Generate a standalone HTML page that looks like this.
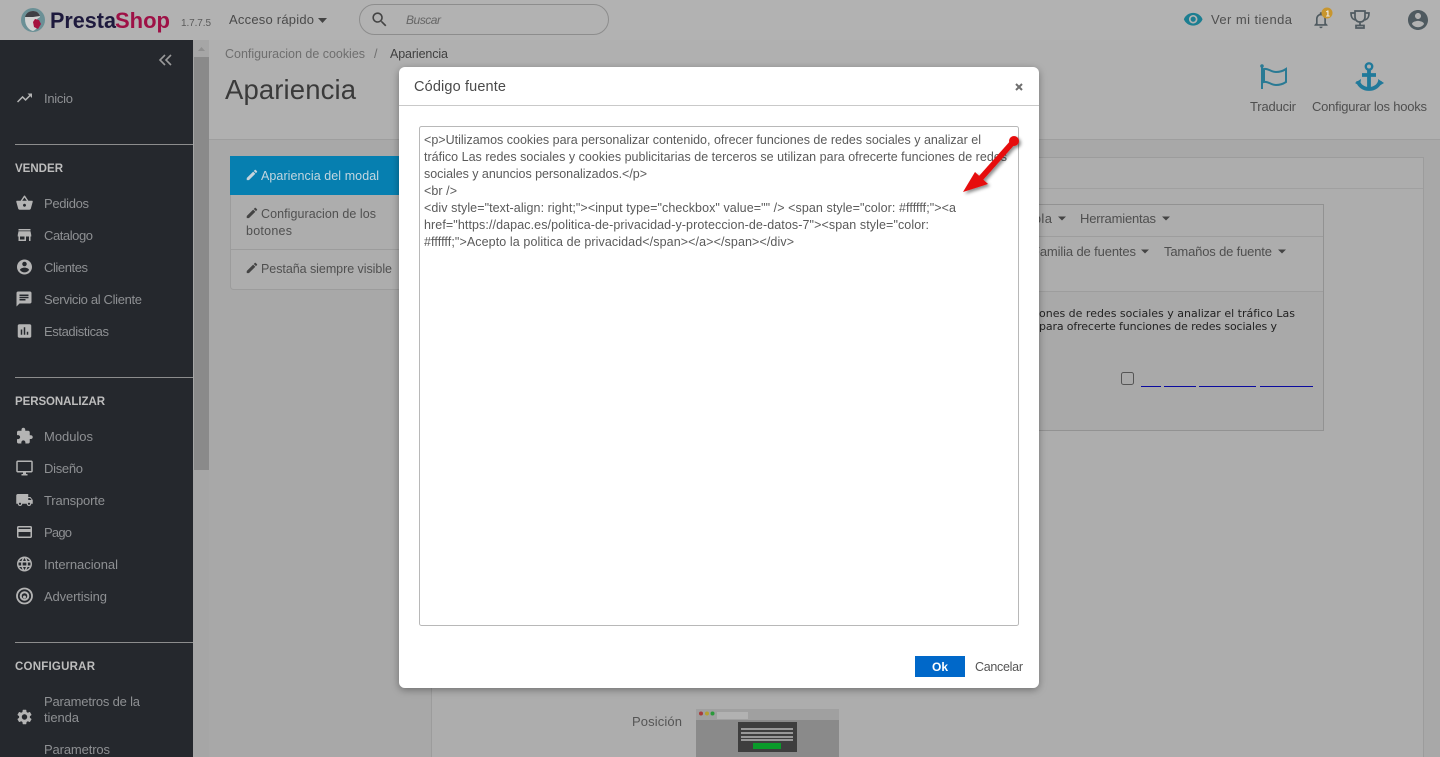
<!DOCTYPE html>
<html lang="es"><head><meta charset="utf-8"><title>Apariencia</title>
<style>
html,body{margin:0;padding:0;width:1440px;height:757px;overflow:hidden;background:#a9a9a9}
svg{display:block;font-family:"Liberation Sans",sans-serif;font-size:13px}
.s{fill:#8e9093}.h{fill:#bdbdbd;font-weight:bold;font-size:11.5px}.i{fill:#b4b4b4}
.d{fill:#4a4a4a}.m{fill:#4f4f4f}.t{font-size:12.5px;fill:#5a5a5a}
</style></head><body>
<svg width="1440" height="757" viewBox="0 0 1440 757" xmlns="http://www.w3.org/2000/svg">
<defs>
<filter id="ms" x="-5%" y="-5%" width="110%" height="110%"><feDropShadow dx="0" dy="2" stdDeviation="4" flood-color="#000" flood-opacity=".35"/></filter>
<filter id="as" x="-30%" y="-30%" width="170%" height="170%"><feDropShadow dx="2" dy="2" stdDeviation="1.5" flood-color="#000" flood-opacity=".45"/></filter>
</defs>
<rect width="1440" height="757" fill="#a8a8a8"/>
<!-- top bar -->
<rect width="1440" height="40" fill="#b2b2b2"/>
<circle cx="33" cy="20" r="12" fill="#6b9096"/>
<path d="M25 19c0-5 3-8 8-8s7 3 7 6l-3 2 1 4c0 4-2 7-5 8-4-1-8-5-8-12z" fill="#d2d2d2"/>
<path d="M25 17c1-4 4-6 8-6s6 2 7 5l-7 1z" fill="#3f3f45"/>
<path d="M35 19l4 1 2 4-3 5-4-2-1-5z" fill="#a5123f"/>
<text x="50" y="28" font-size="22" font-weight="bold" fill="#1e1a3d" textLength="66" lengthAdjust="spacingAndGlyphs">Presta</text>
<text x="115" y="28" font-size="22" font-weight="bold" fill="#9e1146" textLength="55" lengthAdjust="spacingAndGlyphs">Shop</text>
<text x="181" y="26" font-size="10" fill="#5b5b5b" textLength="30">1.7.7.5</text>
<text x="229" y="24" class="d" textLength="85">Acceso rápido</text>
<path d="M318 18h9l-4.500 5z" fill="#444"/>
<rect x="359.500" y="4.500" width="249" height="30" rx="15" fill="#b2b2b2" stroke="#8d8d8d"/>
<path transform="translate(370 10) scale(.8)" d="M15.500 14h-.79l-.28-.27C15.410 12.590 16 11.110 16 9.500 16 5.910 13.090 3 9.500 3S3 5.910 3 9.500 5.910 16 9.500 16c1.610 0 3.090-.59 4.230-1.570l.27.28v.79l5 4.990L20.490 19l-4.990-5zm-6 0C7.010 14 5 11.990 5 9.500S7.010 5 9.500 5 14 7.010 14 9.500 11.990 14 9.500 14z" fill="#444"/>
<text x="406" y="24" font-size="12" font-style="italic" fill="#666" textLength="35">Buscar</text>
<path transform="translate(1183 9) scale(.85)" d="M12 4.500C7 4.500 2.730 7.610 1 12c1.730 4.390 6 7.500 11 7.500s9.270-3.110 11-7.500c-1.730-4.390-6-7.500-11-7.500zM12 17c-2.760 0-5-2.240-5-5s2.240-5 5-5 5 2.240 5 5-2.240 5-5 5zm0-8c-1.660 0-3 1.340-3 3s1.340 3 3 3 3-1.340 3-3-1.340-3-3-3z" fill="#1c7e91"/>
<text x="1211" y="24" class="m" textLength="81">Ver mi tienda</text>
<path transform="translate(1311 10) scale(.83)" d="M12 22c1.100 0 2-.9 2-2h-4c0 1.100.9 2 2 2zm6-6v-5c0-3.070-1.630-5.640-4.500-6.320V4c0-.83-.67-1.500-1.500-1.500s-1.500.67-1.500 1.500v.68C7.640 5.360 6 7.920 6 11v5l-2 2v1h16v-1l-2-2zm-2 1H8v-6c0-2.480 1.510-4.500 4-4.500s4 2.020 4 4.500v6z" fill="#4f5a60"/>
<circle cx="1327" cy="13" r="5.500" fill="#c8962e"/>
<text x="1325.500" y="16.500" font-size="8" font-weight="bold" fill="#eee">1</text>
<path d="M1355 11h10v6c0 3-2 5-5 5s-5-2-5-5zM1355 13h-4c0 4 1 6 4 7M1365 13h4c0 4-1 6-4 7M1360 22v3M1356 25.500h8v2.500h-8z" fill="none" stroke="#4f5a60" stroke-width="1.700"/>
<path transform="translate(1406 8)" d="M12 2C6.480 2 2 6.480 2 12s4.480 10 10 10 10-4.480 10-10S17.520 2 12 2zm0 3c1.660 0 3 1.340 3 3s-1.340 3-3 3-3-1.340-3-3 1.340-3 3-3zm0 14.200c-2.500 0-4.710-1.280-6-3.220.03-1.990 4-3.080 6-3.080 1.990 0 5.970 1.090 6 3.080-1.290 1.940-3.500 3.220-6 3.220z" fill="#4f5a60"/>
<!-- sidebar -->
<rect y="40" width="193" height="717" fill="#25282d"/>
<rect x="193" y="40" width="16" height="717" fill="#a6a6a6"/>
<rect x="194" y="57" width="15" height="413" fill="#8a8a8a"/>
<path d="M198 51l3.500-4 3.500 4z" fill="#8f8f8f"/>
<path d="M165 55l-5 5 5 5M171 55l-5 5 5 5" fill="none" stroke="#9a9a9a" stroke-width="1.600"/>
<path transform="translate(15.500 89) scale(.75)" d="M16 6l2.290 2.290-4.880 4.880-4-4L2 16.590 3.410 18l6-6 4 4 6.300-6.290L22 12V6z" fill="#b4b4b4"/>
<text x="44" y="103" class="s" textLength="29">Inicio</text>
<rect x="15" y="144" width="178" height="1" fill="#8d8d8d"/>
<text x="15" y="172" class="h" textLength="48">VENDER</text>
<path class="i" transform="translate(15.500 194) scale(.75)" d="M17.210 9l-4.380-6.560c-.19-.28-.51-.42-.83-.42-.32 0-.64.140-.83.430L6.790 9H2c-.55 0-1 .45-1 1 0 .09.01.18.04.27l2.540 9.270c.23.84 1 1.460 1.920 1.460h13c.92 0 1.690-.62 1.930-1.460l2.540-9.270L23 10c0-.55-.45-1-1-1h-4.790zM9 9l3-4.400L15 9H9zm3 8c-1.100 0-2-.9-2-2s.9-2 2-2 2 .9 2 2-.9 2-2 2z"/>
<text x="44" y="208" class="s" textLength="45">Pedidos</text>
<path class="i" transform="translate(15.500 226) scale(.75)" d="M20 4H4v2h16V4zm1 10v-2l-1-5H4l-1 5v2h1v6h10v-6h4v6h2v-6h1zm-9 4H6v-4h6v4z"/>
<text x="44" y="240" class="s" textLength="49">Catalogo</text>
<path class="i" transform="translate(15.500 258) scale(.75)" d="M12 2C6.480 2 2 6.480 2 12s4.480 10 10 10 10-4.480 10-10S17.520 2 12 2zm0 3c1.660 0 3 1.340 3 3s-1.340 3-3 3-3-1.340-3-3 1.340-3 3-3zm0 14.200c-2.500 0-4.710-1.280-6-3.220.03-1.990 4-3.080 6-3.080 1.990 0 5.970 1.090 6 3.080-1.290 1.940-3.500 3.220-6 3.220z"/>
<text x="44" y="272" class="s" textLength="44">Clientes</text>
<path class="i" transform="translate(15 290) scale(.75)" d="M20 2H4c-1.100 0-1.990.9-1.990 2L2 22l4-4h14c1.100 0 2-.9 2-2V4c0-1.100-.9-2-2-2zM6 9h12v2H6V9zm8 5H6v-2h8v2zm4-6H6V6h12v2z"/>
<text x="44" y="304" class="s" textLength="98">Servicio al Cliente</text>
<path class="i" transform="translate(15.500 322) scale(.75)" d="M19 3H5c-1.100 0-2 .9-2 2v14c0 1.100.9 2 2 2h14c1.100 0 2-.9 2-2V5c0-1.100-.9-2-2-2zM9 17H7v-7h2v7zm4 0h-2V7h2v10zm4 0h-2v-4h2v4z"/>
<text x="44" y="336" class="s" textLength="65">Estadisticas</text>
<rect x="15" y="377" width="178" height="1" fill="#8d8d8d"/>
<text x="15" y="405" class="h" textLength="90">PERSONALIZAR</text>
<path class="i" transform="translate(15.500 427) scale(.75)" d="M20.500 11H19V7c0-1.100-.9-2-2-2h-4V3.500C13 2.120 11.880 1 10.500 1S8 2.120 8 3.500V5H4c-1.100 0-1.990.9-1.990 2v3.800H3.500c1.490 0 2.700 1.210 2.700 2.700s-1.210 2.700-2.700 2.700H2V20c0 1.100.9 2 2 2h3.800v-1.500c0-1.490 1.210-2.700 2.700-2.700 1.490 0 2.700 1.210 2.700 2.700V22H17c1.100 0 2-.9 2-2v-4h1.500c1.380 0 2.500-1.120 2.500-2.500S21.880 11 20.500 11z"/>
<text x="44" y="441" class="s" textLength="49">Modulos</text>
<path class="i" transform="translate(15.500 459) scale(.75)" d="M21 2H3c-1.100 0-2 .9-2 2v12c0 1.100.9 2 2 2h7v2H8v2h8v-2h-2v-2h7c1.100 0 2-.9 2-2V4c0-1.100-.9-2-2-2zm0 14H3V4h18v12z"/>
<text x="44" y="473" class="s" textLength="39">Diseño</text>
<path class="i" transform="translate(15.500 491) scale(.75)" d="M20 8h-3V4H3c-1.100 0-2 .9-2 2v11h2c0 1.660 1.340 3 3 3s3-1.340 3-3h6c0 1.660 1.340 3 3 3s3-1.340 3-3h2v-5l-3-4zM6 18.500c-.83 0-1.500-.67-1.500-1.500s.67-1.500 1.500-1.500 1.500.67 1.500 1.500-.67 1.500-1.500 1.500zm13.500-9l1.960 2.500H17V9.500h2.500zm-1.500 9c-.83 0-1.500-.67-1.500-1.500s.67-1.500 1.500-1.500 1.500.67 1.500 1.500-.67 1.500-1.500 1.500z"/>
<text x="44" y="505" class="s" textLength="61">Transporte</text>
<path class="i" transform="translate(15.500 523) scale(.75)" d="M20 4H4c-1.110 0-1.990.89-1.990 2L2 18c0 1.110.89 2 2 2h16c1.110 0 2-.89 2-2V6c0-1.110-.89-2-2-2zm0 14H4v-6h16v6zm0-10H4V6h16v2z"/>
<text x="44" y="537" class="s" textLength="28">Pago</text>
<path class="i" transform="translate(15.500 555) scale(.75)" d="M11.990 2C6.470 2 2 6.480 2 12s4.470 10 9.990 10C17.520 22 22 17.520 22 12S17.520 2 11.990 2zm6.930 6h-2.950c-.32-1.250-.78-2.450-1.380-3.560 1.840.63 3.370 1.910 4.330 3.560zM12 4.040c.83 1.200 1.480 2.530 1.910 3.960h-3.820c.43-1.430 1.080-2.760 1.910-3.960zM4.260 14C4.100 13.360 4 12.690 4 12s.1-1.360.26-2h3.380c-.08.66-.14 1.320-.14 2 0 .68.06 1.340.14 2H4.260zm.82 2h2.950c.32 1.250.78 2.450 1.380 3.560-1.840-.63-3.370-1.900-4.330-3.560zm2.950-8H5.080c.96-1.660 2.490-2.930 4.330-3.560C8.810 5.550 8.350 6.750 8.030 8zM12 19.960c-.83-1.200-1.480-2.530-1.910-3.960h3.820c-.43 1.430-1.080 2.760-1.910 3.960zM14.340 14H9.660c-.09-.66-.16-1.320-.16-2 0-.68.07-1.350.16-2h4.680c.09.650.16 1.320.16 2 0 .68-.07 1.340-.16 2zm.25 5.560c.6-1.110 1.060-2.310 1.380-3.560h2.950c-.96 1.650-2.490 2.930-4.330 3.560zM16.360 14c.08-.66.14-1.320.14-2 0-.68-.06-1.340-.14-2h3.380c.16.640.26 1.310.26 2s-.1 1.360-.26 2h-3.380z"/>
<text x="44" y="569" class="s" textLength="74">Internacional</text>
<circle cx="24.500" cy="596" r="7.500" fill="none" stroke="#b4b4b4" stroke-width="1.800"/>
<circle cx="24.500" cy="596" r="3.800" fill="none" stroke="#b4b4b4" stroke-width="2"/>
<circle cx="24.500" cy="597" r="1.500" fill="#b4b4b4"/>
<text x="44" y="601" class="s" textLength="63">Advertising</text>
<rect x="15" y="642" width="178" height="1" fill="#8d8d8d"/>
<text x="15" y="670" class="h" textLength="80">CONFIGURAR</text>
<path class="i" transform="translate(15.500 708) scale(.75)" d="M19.140 12.940c.04-.3.06-.61.06-.94 0-.32-.02-.64-.07-.94l2.030-1.580c.18-.14.23-.41.12-.61l-1.920-3.320c-.12-.22-.37-.29-.59-.22l-2.390.96c-.5-.38-1.030-.7-1.620-.94l-.36-2.540c-.04-.24-.24-.41-.48-.41h-3.840c-.24 0-.43.17-.47.41l-.36 2.540c-.59.24-1.130.57-1.620.94l-2.390-.96c-.22-.08-.47 0-.59.22L2.740 8.870c-.12.21-.08.47.12.61l2.030 1.580c-.05.3-.09.63-.09.94s.02.64.07.94l-2.030 1.580c-.18.14-.23.41-.12.61l1.920 3.320c.12.22.37.29.59.22l2.390-.96c.5.38 1.030.7 1.620.94l.36 2.540c.05.24.24.41.48.41h3.840c.24 0 .44-.17.47-.41l.36-2.540c.59-.24 1.130-.56 1.620-.94l2.390.96c.22.08.47 0 .59-.22l1.920-3.320c.12-.22.07-.47-.12-.61l-2.010-1.580zM12 15.600c-1.980 0-3.600-1.620-3.600-3.600s1.620-3.600 3.600-3.600 3.600 1.620 3.600 3.600-1.620 3.600-3.600 3.600z"/>
<text x="44" y="706" class="s" textLength="96">Parametros de la</text>
<text x="44" y="722" class="s" textLength="35">tienda</text>
<text x="44" y="754" class="s" textLength="66">Parametros</text>
<!-- page head -->
<rect x="209" y="40" width="1231" height="99" fill="#b0b0b0"/>
<rect x="209" y="139" width="1231" height="1" fill="#9e9e9e"/>
<text x="225" y="58" font-size="12.500" fill="#6e6e6e" textLength="140">Configuracion de cookies</text>
<text x="374" y="58" font-size="12.500" fill="#6e6e6e">/</text>
<text x="390" y="58" font-size="12.500" fill="#3f3f3f" textLength="58">Apariencia</text>
<text x="225" y="99" font-size="27.500" fill="#3a3a3a" textLength="131">Apariencia</text>
<path d="M1262 66v23" stroke="#2a7a94" stroke-width="2"/><circle cx="1262" cy="66" r="1.800" fill="#2a7a94"/>
<path d="M1264 69c4-1 7 3 12 3 4 0 7-1 10-3v13c-3 2-6 3-10 3-5 0-8-4-12-3z" fill="none" stroke="#2a7a94" stroke-width="2"/>
<circle cx="1369" cy="66.500" r="3.200" fill="none" stroke="#20799a" stroke-width="2.400"/>
<path d="M1369 70v18M1362 75h14" stroke="#20799a" stroke-width="3.800" fill="none"/>
<path d="M1358 81c1 5 6 8 11 8s10-3 11-8" fill="none" stroke="#20799a" stroke-width="3.800"/>
<path d="M1355 83l6-4-1 7zM1384 83l-6-4 1 7z" fill="#20799a"/>
<text x="1250" y="111" class="m" textLength="46">Traducir</text>
<text x="1312" y="111" class="m" textLength="115">Configurar los hooks</text>
<!-- left tabs -->
<rect x="230.500" y="156.500" width="200" height="133" rx="3" fill="#adadad" stroke="#9c9c9c"/>
<rect x="230" y="156" width="200" height="39" fill="#067fb0"/>
<path transform="translate(245 168) scale(.58)" d="M3 17.250V21h3.750L17.810 9.940l-3.750-3.750L3 17.250zM20.710 7.040c.39-.39.39-1.020 0-1.410l-2.340-2.340c-.39-.39-1.020-.39-1.410 0l-1.830 1.830 3.750 3.750 1.830-1.830z" fill="#c6d4dc"/>
<text x="261" y="180" font-size="12.500" fill="#c3d6df" textLength="118">Apariencia del modal</text>
<path transform="translate(245 206) scale(.58)" d="M3 17.250V21h3.750L17.810 9.940l-3.750-3.750L3 17.250zM20.710 7.040c.39-.39.39-1.020 0-1.410l-2.340-2.340c-.39-.39-1.020-.39-1.410 0l-1.830 1.830 3.750 3.750 1.830-1.830z" fill="#444"/>
<text x="261" y="218" font-size="12.500" fill="#505050" textLength="115">Configuracion de los</text>
<text x="246" y="235" font-size="12.500" fill="#505050" textLength="46">botones</text>
<rect x="231" y="249" width="199" height="1" fill="#9c9c9c"/>
<path transform="translate(245 261) scale(.58)" d="M3 17.250V21h3.750L17.810 9.940l-3.750-3.750L3 17.250zM20.710 7.040c.39-.39.39-1.020 0-1.410l-2.340-2.340c-.39-.39-1.020-.39-1.410 0l-1.830 1.830 3.750 3.750 1.830-1.830z" fill="#444"/>
<text x="261" y="273" font-size="12.500" fill="#505050" textLength="131">Pestaña siempre visible</text>
<!-- main panel -->
<rect x="431.500" y="157.500" width="992" height="620" fill="#adadad" stroke="#9c9c9c"/>
<rect x="432" y="188" width="991" height="1" fill="#a0a0a0"/>
<rect x="1000.500" y="204.500" width="323" height="226" fill="#a9a9a9" stroke="#929292"/>
<rect x="1001" y="205" width="322" height="86" fill="#adadad"/>
<rect x="1001" y="236" width="322" height="1" fill="#9d9d9d"/>
<rect x="1001" y="291" width="322" height="1" fill="#9d9d9d"/>
<text x="1019" y="223" class="m" textLength="33">Tabla</text>
<path d="M1058 216.500h8l-4 4z" fill="#444"/>
<text x="1080" y="223" class="m" textLength="76">Herramientas</text>
<path d="M1162 216.500h8l-4 4z" fill="#444"/>
<text x="1032" y="256" class="m" textLength="104">Familia de fuentes</text>
<path d="M1141 249.500h8l-4 4z" fill="#444"/>
<text x="1164" y="256" class="m" textLength="108">Tamaños de fuente</text>
<path d="M1278 249.500h8l-4 4z" fill="#444"/>
<text x="1039" y="317" font-family="DejaVu Sans" font-size="11" fill="#222" textLength="256">ones de redes sociales y analizar el tráfico Las</text>
<text x="1039" y="330" font-family="DejaVu Sans" font-size="11" fill="#222" textLength="238">para ofrecerte funciones de redes sociales y</text>
<rect x="1121.500" y="372.500" width="12" height="12" rx="2" fill="#a9a9a9" stroke="#555"/>
<path d="M1141 386.500h20M1164 386.500h32M1199 386.500h57M1260 386.500h53" stroke="#0a0a9e" stroke-width="1"/>
<text x="632" y="726" font-size="13" fill="#555" textLength="50">Posición</text>
<rect x="696" y="709" width="143" height="48" fill="#8a8a8a"/>
<rect x="696" y="709" width="143" height="11" fill="#a0a0a0"/>
<circle cx="701" cy="713.500" r="2" fill="#a83a3a"/><circle cx="707" cy="713.500" r="2" fill="#b5a030"/><circle cx="712.500" cy="713.500" r="2" fill="#2a9a3a"/>
<rect x="717" y="712" width="31" height="7" fill="#b2b2b2"/>
<rect x="738" y="722" width="59" height="30" fill="#3e3e3e"/>
<path d="M741 729h52M741 733h52M741 737h52M741 740h52" stroke="#b5b5b5" stroke-width="1.500"/>
<rect x="753" y="743" width="28" height="6" fill="#0a9a2a"/>
<!-- modal -->
<rect x="399" y="67" width="640" height="621" rx="6" fill="#fff" filter="url(#ms)"/>
<rect x="399" y="105" width="640" height="1" fill="#c9c9c9"/>
<text x="414" y="91" font-size="14.500" fill="#4a4a4a" textLength="92">Código fuente</text>
<path d="M1016 84l6 6M1022 84l-6 6" stroke="#6f6f6f" stroke-width="2"/>
<rect x="419.500" y="126.500" width="599" height="499" rx="2" fill="#fff" stroke="#b8b8b8"/>
<text x="424" y="144" class="t" textLength="557">&lt;p&gt;Utilizamos cookies para personalizar contenido, ofrecer funciones de redes sociales y analizar el</text>
<text x="424" y="161" class="t" textLength="583">tráfico Las redes sociales y cookies publicitarias de terceros se utilizan para ofrecerte funciones de redes</text>
<text x="424" y="178" class="t" textLength="223">sociales y anuncios personalizados.&lt;/p&gt;</text>
<text x="424" y="195" class="t" textLength="33">&lt;br /&gt;</text>
<text x="424" y="212" class="t" textLength="532">&lt;div style="text-align: right;"&gt;&lt;input type="checkbox" value="" /&gt; &lt;span style="color: #ffffff;"&gt;&lt;a</text>
<text x="424" y="229" class="t" textLength="505">href="https://dapac.es/politica-de-privacidad-y-proteccion-de-datos-7"&gt;&lt;span style="color:</text>
<text x="424" y="246" class="t" textLength="370">#ffffff;"&gt;Acepto la politica de privacidad&lt;/span&gt;&lt;/a&gt;&lt;/span&gt;&lt;/div&gt;</text>
<rect x="915" y="656" width="50" height="21" fill="#0068c9"/>
<text x="932" y="671" font-size="12" font-weight="bold" fill="#fff" textLength="16">Ok</text>
<text x="975" y="671" font-size="12.500" fill="#555" textLength="48">Cancelar</text>
<!-- arrow -->
<g filter="url(#as)" fill="#e60a0a">
<circle cx="1014" cy="141" r="5"/>
<path d="M1012 139l4 4-33 37-4-4z"/>
<path d="M963 192l12-20 13 12z"/>
</g>
</svg>
</body></html>
